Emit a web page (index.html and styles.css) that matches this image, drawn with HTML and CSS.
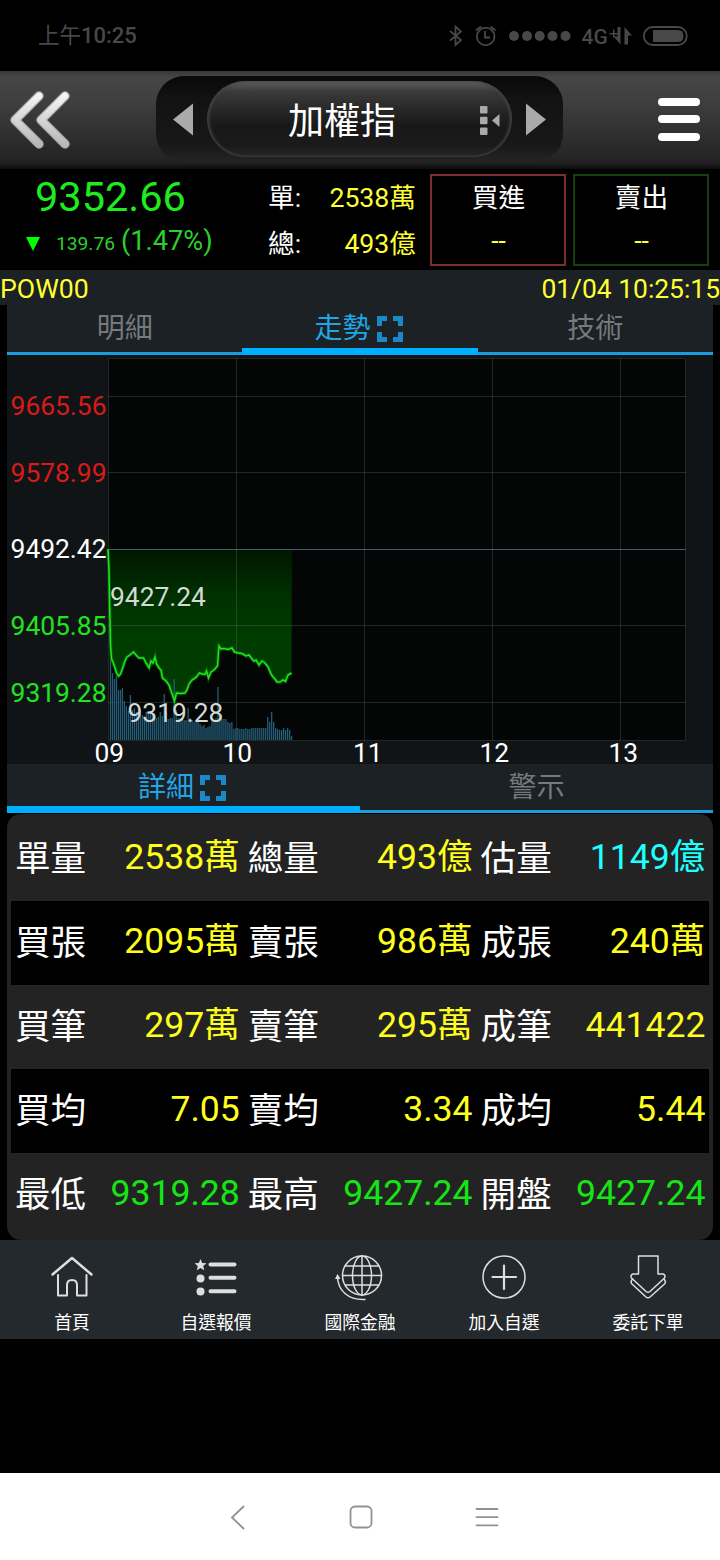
FILE: index.html
```
<!DOCTYPE html>
<html lang="zh-Hant">
<head>
    <meta charset="UTF-8">
    <meta name="viewport" content="width=device-width, initial-scale=1.0">
    <title>加權指</title>
    <link rel="stylesheet" href="styles.css">
</head>
<body>
    <div class="status-bar">
        <span class="clock">上午<b>10:25</b></span>
        <svg class="status-icons" width="244" height="30" viewBox="446 21 244 30">
            <path class="thin" d="M450 31l11 9-5.500 5V26.500l5.500 5-11 9"/>
            <circle class="thin" cx="485.700" cy="36.500" r="8.800"/>
            <path class="thin" d="M485 31v6.500h5M476 30.500l5-4M495.500 30.500l-5-4"/>
            <circle cx="514" cy="36" r="5"/>
            <circle cx="527" cy="36" r="5"/>
            <circle cx="539.700" cy="36" r="5"/>
            <circle cx="552.500" cy="36" r="5"/>
            <circle cx="565.500" cy="36" r="5"/>
            <text x="581.500" y="43.500">4G</text>
            <path d="M620.500 27v17.500l-7-8h4V27zM624.500 44.500V27l7.500 8.500h-4v9zM609.500 33h3.500v-3.500h1.500v3.500h3v1.500h-3v3H613v-3h-3.500z"/>
            <rect class="thin" x="643.800" y="27" width="43" height="18" rx="9"/>
            <path d="M653 30h25q5.500 0 5.500 6t-5.500 6h-25z"/>
        </svg>
    </div>

    <div class="header">
        <svg class="back" width="62" height="60" viewBox="0 0 62 60">
            <defs>
                <linearGradient id="silver" x1="0" y1="0" x2="0" y2="1">
                    <stop offset="0" stop-color="#f4f4f4"/>
                    <stop offset="1" stop-color="#b8b8b8"/>
                </linearGradient>
            </defs>
            <path class="chev-edge" d="M29 7L5 31l24 24M55 7L31 31l24 24"/>
            <path class="chev" d="M29 7L5 31l24 24M55 7L31 31l24 24"/>
        </svg>
        <div class="switcher">
            <svg width="22" height="34" viewBox="0 0 22 34"><path d="M1 17.500L21 1.500v32z"/></svg>
            <div class="pill">
                <span>加權指</span>
                <svg class="pick" width="22" height="30" viewBox="0 0 22 30">
                    <rect x="1" y="0" width="7.500" height="7.500" rx="1"/>
                    <rect x="1" y="10.700" width="7.500" height="7.500" rx="1"/>
                    <rect x="1" y="21.500" width="7.500" height="7.500" rx="1"/>
                    <path d="M13 14.500l7.500-6.500v13z"/>
                </svg>
            </div>
            <svg width="22" height="34" viewBox="0 0 22 34"><path d="M21 17.500L1 1.500v32z"/></svg>
        </div>
        <div class="menu"><i></i><i></i><i></i></div>
    </div>

    <div class="quote">
        <div class="price">
            <div class="last">9352.66</div>
            <div class="change"><i class="down"></i><small>139.76</small><span>(1.47%)</span></div>
        </div>
        <div class="volumes">
            <div><span>單:</span><em>2538萬</em></div>
            <div><span>總:</span><em>493億</em></div>
        </div>
        <div class="deal buy"><span>買進</span><em>--</em></div>
        <div class="deal sell"><span>賣出</span><em>--</em></div>
    </div>

    <div class="info"><span>POW00</span><span class="time">01/04 10:25:15</span></div>

    <div class="panel">
        <div class="tabs three">
            <div class="tab">明細</div>
            <div class="tab active">走勢<svg class="expand" width="26" height="26" viewBox="0 0 26 26"><path d="M2.500 10V2.500H10M16 2.500h7.500V10M23.500 16v7.500H16M10 23.500H2.500V16"/></svg></div>
            <div class="tab">技術</div>
        </div>

        <svg class="chart" width="706" height="409" viewBox="7 355 706 409">
            <defs>
                <linearGradient id="fill" gradientUnits="userSpaceOnUse" x1="0" y1="549" x2="0" y2="640">
                    <stop offset="0" stop-color="#001600"/>
                    <stop offset="0.500" stop-color="#003000"/>
                    <stop offset="1" stop-color="#003c00"/>
                </linearGradient>
            </defs>
            <rect x="108" y="358" width="578" height="383" fill="#040605"/>
            <path id="area" fill="url(#fill)"/>
            <path class="grid" d="M108.500 358.500H685.500V740.500H108.500zM108 396.500H686M108 472.500H686M108 625.500H686M108 702.500H686M236.500 358V741M364.500 358V741M492.500 358V741M620.500 358V741"/>
            <path class="base" d="M108 549.500H686"/>
            <path id="volume" class="volume"/>
            <path id="glow" class="glow"/>
            <path id="line" class="line"/>
            <g class="up" text-anchor="end">
                <text x="106.500" y="415">9665.56</text>
                <text x="106.500" y="481.500">9578.99</text>
            </g>
            <text class="flat" x="106.500" y="558" text-anchor="end">9492.42</text>
            <g class="fall" text-anchor="end">
                <text x="106.500" y="635">9405.85</text>
                <text x="106.500" y="702">9319.28</text>
            </g>
            <g class="mark">
                <text x="110" y="606">9427.24</text>
                <text x="127.500" y="722">9319.28</text>
            </g>
            <g class="flat">
                <text x="94.500" y="762">09</text>
                <text x="222.500" y="762">10</text>
                <text x="353" y="762">11</text>
                <text x="479.500" y="762">12</text>
                <text x="608.500" y="762">13</text>
            </g>
        </svg>

        <div class="tabs two">
            <div class="tab active">詳細<svg class="expand" width="26" height="26" viewBox="0 0 26 26"><path d="M2.500 10V2.500H10M16 2.500h7.500V10M23.500 16v7.500H16M10 23.500H2.500V16"/></svg></div>
            <div class="tab">警示</div>
        </div>

        <div class="details">
            <div class="row">
                <div><span>單量</span><em>2538萬</em></div>
                <div><span>總量</span><em>493億</em></div>
                <div><span>估量</span><em class="cyan">1149億</em></div>
            </div>
            <div class="row">
                <div><span>買張</span><em>2095萬</em></div>
                <div><span>賣張</span><em>986萬</em></div>
                <div><span>成張</span><em>240萬</em></div>
            </div>
            <div class="row">
                <div><span>買筆</span><em>297萬</em></div>
                <div><span>賣筆</span><em>295萬</em></div>
                <div><span>成筆</span><em>441422</em></div>
            </div>
            <div class="row">
                <div><span>買均</span><em>7.05</em></div>
                <div><span>賣均</span><em>3.34</em></div>
                <div><span>成均</span><em>5.44</em></div>
            </div>
            <div class="row">
                <div><span>最低</span><em class="green">9319.28</em></div>
                <div><span>最高</span><em class="green">9427.24</em></div>
                <div><span>開盤</span><em class="green">9427.24</em></div>
            </div>
        </div>
    </div>

    <div class="toolbar">
        <div class="tool">
            <svg width="48" height="48" viewBox="0 0 48 48">
                <path class="bold" d="M4.500 21.500L24 5l19.500 16.500"/>
                <path d="M10 22v20.500h9V32q0-5 5-5t5 5v10.500h9.500V22" stroke-width="2"/>
            </svg>
            <span>首頁</span>
        </div>
        <div class="tool">
            <svg width="48" height="48" viewBox="0 0 48 48">
                <path class="solid" d="M8.500 6l1.700 4 4.300.3-3.300 2.800 1 4.200-3.700-2.300-3.700 2.300 1-4.200-3.300-2.800 4.300-.3z"/>
                <circle class="solid" cx="8.500" cy="25.500" r="4"/>
                <circle class="solid" cx="8.500" cy="38.500" r="4"/>
                <path class="bar" d="M18.500 11.500H42.500M18.500 24.800H42.500M18.500 38.300H42.500"/>
            </svg>
            <span>自選報價</span>
        </div>
        <div class="tool">
            <svg width="48" height="48" viewBox="0 0 48 48">
                <circle cx="26" cy="22.500" r="19.500"/>
                <ellipse cx="26" cy="22.500" rx="9.500" ry="19.500"/>
                <path d="M26 3v39M6.500 22.500h39M9.500 13h33M9.500 32h33M1.500 23q0 11 7.500 17.500t20 6"/>
                <path class="solid" d="M-1 26l2.500-5 3 5z"/>
            </svg>
            <span>國際金融</span>
        </div>
        <div class="tool">
            <svg width="48" height="48" viewBox="0 0 48 48">
                <circle cx="24" cy="24" r="21"/>
                <path d="M24 12.500v23.500M12.500 24h23.500" stroke-width="2.200"/>
            </svg>
            <span>加入自選</span>
        </div>
        <div class="tool">
            <svg width="48" height="48" viewBox="0 0 48 48">
                <path d="M14.500 3h19.500v18h5q3 1 1.500 4L26 38.500q-2 1.500-4 0L7.500 25q-1.500-3 1.500-4h5.500z"/>
                <path d="M8.500 26q-2.500 3-.5 5L22 44q2 1.500 4 0l14.500-13q2-2-.5-5"/>
            </svg>
            <span>委託下單</span>
        </div>
    </div>

    <div class="system-nav">
        <svg width="20" height="26" viewBox="0 0 20 26"><path d="M15.500 2.500L4 13.500l11.500 11"/></svg>
        <svg width="26" height="26" viewBox="0 0 26 26"><rect x="2.500" y="2.500" width="21" height="21" rx="4.500"/></svg>
        <svg width="26" height="26" viewBox="0 0 26 26"><path d="M2.500 5h21M2.500 13.200h21M2.500 21.300h21"/></svg>
    </div>

    <script src="chart.js"></script>
</body>
</html>
```
FILE: styles.css
```
body {
    margin: 0;
    width: 720px;
    height: 1560px;
    display: flex;
    flex-direction: column;
    background: #000;
    color: #fff;
    font-family: Roboto, "Noto Sans CJK TC", sans-serif;
    overflow: hidden;
}
em, i {
    font-style: normal;
}
svg {
    display: block;
    flex: none;
}

/* phone status bar */
.status-bar {
    height: 71px;
    box-sizing: border-box;
    padding: 1px 30px 0 38px;
    display: flex;
    align-items: center;
    justify-content: space-between;
    color: #484848;
    font-size: 21.5px;
    line-height: 26px;
}
.clock b {
    font-weight: 500;
    font-size: 22px;
}
.status-icons {
    fill: #484848;
    font-size: 21px;
    font-weight: 500;
}
.status-icons .thin {
    fill: none;
    stroke: #484848;
    stroke-width: 1.8;
}

/* title bar */
.header {
    height: 98px;
    box-sizing: border-box;
    padding: 5px 20px 7px 10px;
    display: flex;
    align-items: center;
    background: linear-gradient(#383838 0, #464646 6px, #3f3f3f 30px, #242424 88px, #202020 92px, #0c0c0c 98px);
}
.back path {
    fill: none;
    stroke-linecap: round;
    stroke-linejoin: round;
}
.chev-edge {
    stroke: #a5a5a5;
    stroke-width: 9.5;
}
.chev {
    stroke: url(#silver);
    stroke-width: 7;
}
.switcher {
    width: 407px;
    height: 86px;
    margin-left: 84px;
    box-sizing: border-box;
    padding: 0 16px;
    display: flex;
    align-items: center;
    justify-content: space-between;
    border-radius: 28px;
    background: linear-gradient(#080808, #121212 25%, #181818 80%, #242424);
    fill: #aaa;
}
.pill {
    width: 305px;
    height: 76px;
    box-sizing: border-box;
    padding-right: 11px;
    display: flex;
    align-items: center;
    justify-content: flex-end;
    gap: 83px;
    border-radius: 38px;
    background: linear-gradient(#606060, #3a3a3a 14%, #272727 38%, #181818 60%, #1a1a1a 85%, #262626);
    box-shadow: inset 2px 0 3px #444, inset -2px 0 3px #444;
    font-size: 36px;
}
.pill span {
    margin-bottom: 2px;
}
.pick {
    margin-top: 3px;
}
.menu {
    width: 42px;
    margin-left: auto;
    display: grid;
    gap: 9.5px;
}
.menu i {
    height: 8px;
    border-radius: 4px;
    background: #fff;
}

/* quote summary */
.quote {
    height: 101px;
    display: flex;
    font-size: 26.67px;
    line-height: 32px;
}
.quote em {
    color: #ff3;
}
.price {
    width: 268px;
    color: #1eec1e;
}
.last {
    padding: 4px 0 0 35px;
    font-size: 41.5px;
    line-height: 48px;
}
.change {
    display: flex;
    align-items: baseline;
    padding: 4px 0 0 26px;
    color: #2ccf2c;
}
.change small {
    width: 65px;
    margin-left: 16px;
    font-size: 19.2px;
}
.change span {
    font-size: 27.2px;
}
.down {
    align-self: center;
    margin-top: 2px;
    border: 7.5px solid transparent;
    border-top: 14px solid #0f0;
    border-bottom: 0;
}
.volumes {
    width: 148px;
    padding-top: 13px;
}
.volumes div {
    display: flex;
    justify-content: space-between;
    height: 46px;
}
.deal {
    width: 136px;
    height: 92px;
    box-sizing: border-box;
    margin: 5px 7px 0 0;
    padding: 6px 0 0 1px;
    border: 2px solid #7c302e;
    display: flex;
    flex-direction: column;
    align-items: center;
}
.deal span {
    height: 43px;
}
.buy {
    margin-left: 14px;
}
.sell {
    border-color: #17400f;
}
.info {
    height: 35px;
    display: flex;
    justify-content: space-between;
    background: #1b2124;
    color: #ff3;
    font-size: 26.67px;
    line-height: 39px;
    white-space: nowrap;
}
.time {
    font-size: 26.4px;
}

/* chart and details */
.panel {
    width: 706px;
    margin-left: 7px;
}
.tabs {
    display: grid;
    background: #1b2124;
    color: #757a7d;
    font-size: 28px;
    line-height: 34px;
}
.three {
    height: 50px;
    grid-template-columns: repeat(3, 1fr);
}
.two {
    height: 49px;
    grid-template-columns: repeat(2, 1fr);
}
.tab {
    display: flex;
    justify-content: center;
    align-items: center;
    gap: 6px;
    padding-bottom: 2px;
    box-shadow: inset 0 -3px #1b9ddd;
}
.active {
    padding-right: 3px;
    color: #22a5e4;
    box-shadow: inset 0 -7px #00aeff;
}
.expand path {
    fill: none;
    stroke: #1b88c8;
    stroke-width: 5;
}
.chart {
    background: #111417;
    font-size: 26.4px;
}
.grid, .base, .volume, .glow, .line {
    fill: none;
}
.grid {
    stroke: #9a9a9a;
    stroke-opacity: 0.22;
}
.base {
    stroke: #3f6070;
}
.volume {
    stroke: #265d79;
    stroke-width: 1.3;
}
.glow {
    stroke: #0c8c0c;
    stroke-width: 3.5;
    stroke-opacity: 0.5;
}
.line {
    stroke: #1ee61e;
    stroke-width: 1.5;
}
.up {
    fill: #d81b17;
}
.flat {
    fill: #fff;
}
.fall {
    fill: #20e420;
}
.mark {
    fill: #d2dad4;
}
.details {
    margin-top: 1px;
    padding: 3px 4px;
    border-radius: 14px;
    background: #232323;
    font-size: 35.6px;
    line-height: 42px;
}
.row {
    height: 84px;
    display: grid;
    grid-template-columns: repeat(3, 232.8px);
}
.row:nth-child(even) {
    background: #000;
}
.row div {
    display: flex;
    justify-content: space-between;
    align-items: center;
    padding: 0 4px;
}
.row em {
    color: #ffff1e;
    padding-bottom: 4px;
}
.row .cyan {
    color: #1effff;
}
.row .green {
    color: #14e614;
}

/* bottom toolbar */
.toolbar {
    height: 99px;
    display: grid;
    grid-template-columns: repeat(5, 1fr);
    background: #24292d;
}
.tool {
    display: flex;
    flex-direction: column;
    align-items: center;
    padding-top: 13px;
    font-size: 17.8px;
    line-height: 26px;
    gap: 9px;
}
.tool svg {
    fill: none;
    stroke: #dedede;
    stroke-width: 1.5;
    stroke-linejoin: round;
    stroke-linecap: round;
    overflow: visible;
}
.tool .bold {
    stroke-width: 2.5;
}
.tool .bar {
    stroke-width: 4;
}
.tool .solid {
    fill: #dedede;
    stroke: none;
}

.system-nav {
    height: 87px;
    box-sizing: border-box;
    margin-top: auto;
    padding-left: 7px;
    display: flex;
    justify-content: center;
    align-items: center;
    gap: 100px;
    background: #fff;
}
.system-nav svg {
    fill: none;
    stroke: #929292;
    stroke-width: 1.8;
    stroke-linecap: round;
}
```
FILE: chart.js
```
// index line, chart coordinates
const points = [
    [108, 549], [109, 570], [109.5, 600], [110.5, 645], [111.5, 659], [113, 662], [115, 668],
    [116.5, 673], [118.5, 676], [120.5, 674], [123, 667], [125, 661], [127, 657], [130, 655],
    [133.5, 652], [136, 655], [139, 658], [143.5, 658], [146, 663], [149, 668], [151, 661],
    [153, 663], [155, 657], [156.5, 664], [159, 668], [161, 670], [162.5, 678], [166, 681],
    [169, 685], [171, 691], [172.5, 695], [174.5, 701], [176.5, 693], [181, 693.5],
    [185, 693], [187, 690], [189, 684], [192, 680], [196, 677.5], [199.5, 673], [202, 674],
    [205, 674.5], [206.5, 671], [208.5, 678], [211, 672], [214, 670], [217.5, 666],
    [218.2, 656], [219, 646], [221, 649], [224, 648.5], [228, 649.5], [232, 648],
    [234.5, 652], [238, 653], [242, 653.5], [246, 656], [249, 655], [252, 659], [254, 661],
    [256, 660], [259, 665], [262, 661], [265, 663], [268, 667], [271, 674], [273, 677],
    [275, 679], [277, 682], [280, 682], [283, 680], [285.5, 681.5], [288, 675], [291.5, 673]
];

// tops of the volume bars, one every 2px
const volumes = [
    660, 673, 679, 676, 690, 690, 688, 701, 706, 711, 695, 710, 708, 712, 712, 710, 715, 716,
    712, 712, 711, 714, 716, 718, 717, 712, 716, 694, 712, 719, 718, 718, 679, 710, 718, 718,
    719, 720, 720, 708, 718, 720, 722, 722, 721, 724, 726, 725, 728, 727, 726, 721, 720, 718,
    687, 715, 719, 719, 719, 722, 723, 722, 729, 728, 728, 729, 729, 729, 728, 729, 729, 728,
    728, 728, 728, 728, 728, 728, 728, 717, 722, 712, 722, 728, 729, 730, 730, 728, 730, 728,
    730, 736
];

const line = 'M' + points.map(p => p.join(' ')).join('L');
document.getElementById('line').setAttribute('d', line);
document.getElementById('glow').setAttribute('d', line);
document.getElementById('area').setAttribute('d', line + 'L292 549Z');
document.getElementById('volume').setAttribute('d',
    volumes.map((top, i) => `M${110.5 + i * 1.99} 740V${top}`).join(''));
```
